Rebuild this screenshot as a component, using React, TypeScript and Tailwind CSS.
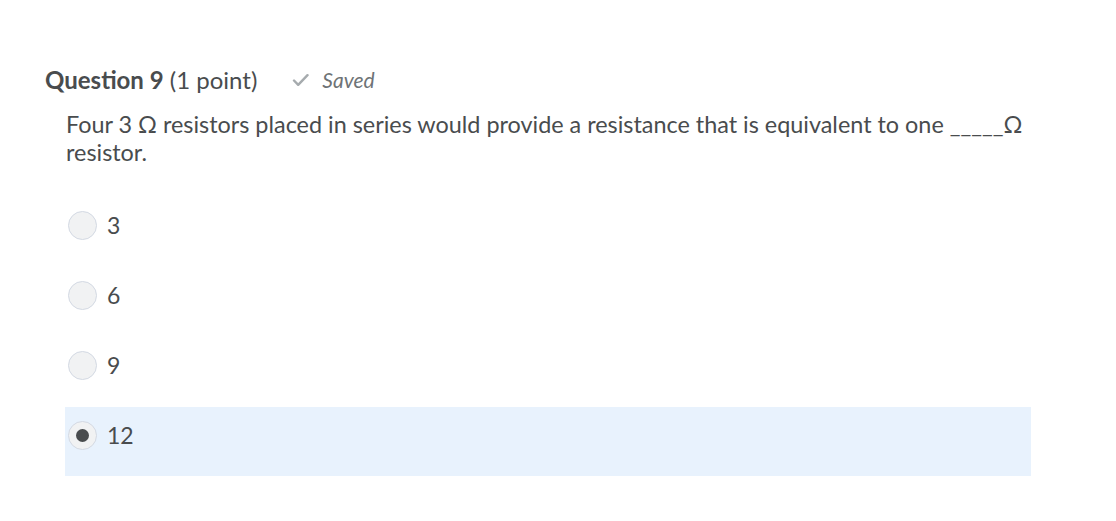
import React from "react";

const options = ["3", "6", "9", "12"];
const selected = "12";

function Radio({ checked }: { checked: boolean }) {
  return (
    <span className="flex h-[29px] w-[29px] shrink-0 items-center justify-center rounded-full border border-[#d3d9e3] bg-[#f1f2f3]">
      {checked && <span className="h-[13px] w-[13px] rounded-full bg-[#494c4e]" />}
    </span>
  );
}

export default function App() {
  return (
    <div className="h-[521px] w-[1116px] bg-white font-['Lato','Liberation_Sans',sans-serif] text-[#494c4e]">
      <div className="pl-[45px] pt-[65px]">
        <div className="flex items-center text-[24px] leading-[30px]">
          <span>
            <span className="font-bold">Question 9</span> (1 point)
          </span>
          <span className="ml-[35px] flex items-center text-[21px] italic text-[#6e7376]">
            <svg width="17" height="14" viewBox="0 0 17 14" className="mr-[13px]">
              <path d="M2 7.5 L6.2 11.8 L15.5 2.2" fill="none" stroke="#a6abae" strokeWidth="2.4" strokeLinecap="round" strokeLinejoin="round" />
            </svg>
            Saved
          </span>
        </div>
        <div className="w-[986px] pl-[21px] pt-[15px]">
          <p className="text-[23.4px] leading-[28px]">
            Four 3 Ω resistors placed in series would provide a resistance that is equivalent to one _____Ω resistor.
          </p>
          <div className="mt-[31px] flex w-[966px] -ml-px flex-col gap-[1px]">
            {options.map((o) => (
              <div
                key={o}
                className={`flex h-[69px] items-start pl-[3px] pt-[14px] ${o === selected ? "bg-[#e8f2fd]" : ""}`}
              >
                <Radio checked={o === selected} />
                <span className="ml-[10px] text-[23px] leading-[29px]">{o}</span>
              </div>
            ))}
          </div>
        </div>
      </div>
    </div>
  );
}
